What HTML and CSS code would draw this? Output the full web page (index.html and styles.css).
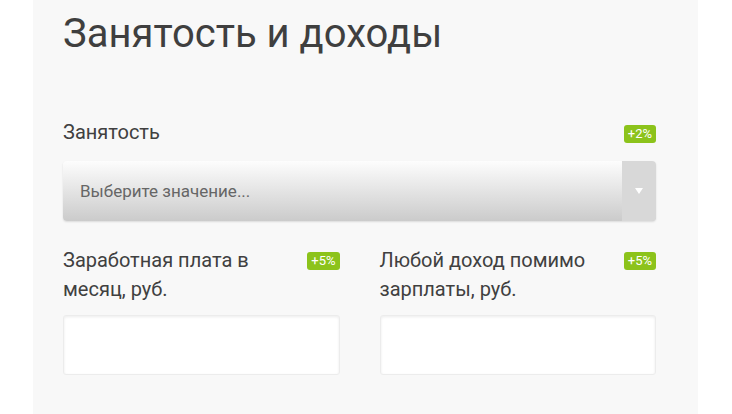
FILE: index.html
```html
<!DOCTYPE html>
<html lang="ru">
<head>
    <meta charset="UTF-8">
    <meta name="viewport" content="width=device-width, initial-scale=1.0">
    <title>Занятость и доходы</title>
    <link rel="stylesheet" href="styles.css">
</head>
<body>
    <div class="panel">
        <h2 class="title">Занятость и доходы</h2>

        <div class="field">
            <div class="field-head">
                <label class="label">Занятость</label>
                <span class="badge">+2%</span>
            </div>
            <div class="select">
                <span class="select-text">Выберите значение...</span>
                <span class="select-arrow"></span>
            </div>
        </div>

        <div class="row">
            <div class="field">
                <div class="field-head">
                    <label class="label">Заработная плата в месяц, руб.</label>
                    <span class="badge">+5%</span>
                </div>
                <input type="text" class="input">
            </div>
            <div class="field">
                <div class="field-head">
                    <label class="label">Любой доход помимо зарплаты, руб.</label>
                    <span class="badge">+5%</span>
                </div>
                <input type="text" class="input">
            </div>
        </div>
    </div>
</body>
</html>
```

FILE: styles.css
```css
*{
    margin: 0px;
    padding: 0px;
    box-sizing: border-box;
}
body {
    font-family: Roboto, "Liberation Sans", sans-serif;
    background-color: #fff;
    color: #444;
    overflow: hidden;
}
.panel {
    margin-left: 33px;
    width: 665px;
    min-height: 414px;
    background-color: #f8f8f8;
    padding: 11px 42px 0 30px;
}
.title {
    font-size: 40px;
    font-weight: 400;
    line-height: 46px;
    color: #3f3f3f;
    margin-bottom: 61px;
}
.field {
    margin-bottom: 20px;
}
.field-head {
    display: flex;
    justify-content: space-between;
    align-items: flex-start;
    margin-bottom: 14px;
}
.label {
    font-size: 20px;
    line-height: 29px;
    color: #404040;
    padding-right: 30px;
}
.badge {
    flex-shrink: 0;
    background-color: #8cc31b;
    color: #fff;
    font-size: 13px;
    line-height: 18px;
    padding: 0 4px;
    border-radius: 3px;
    margin-top: 7px;
}
.select {
    display: flex;
    height: 60px;
    border-radius: 4px;
    background: linear-gradient(#fdfdfd, #cbcbcb);
    box-shadow: 0 1px 2px rgba(0,0,0,0.12);
    overflow: hidden;
}
.select-text {
    flex: 1;
    padding-left: 17px;
    font-size: 17px;
    line-height: 60px;
    color: #666;
}
.select-arrow {
    width: 34px;
    background-color: #d8d8d8;
    position: relative;
}
.select-arrow::after {
    content: "";
    position: absolute;
    left: 13px;
    top: 27px;
    border-left: 4px solid transparent;
    border-right: 4px solid transparent;
    border-top: 6px solid #fff;
}
.row {
    display: grid;
    grid-template-columns: 1fr 1fr;
    gap: 40px;
    margin-top: 25px;
}
.row .field-head {
    margin-bottom: 11px;
}
.row .badge {
    margin-top: 6px;
}
.input {
    display: block;
    width: 100%;
    height: 60px;
    border: 1px solid #ececec;
    border-radius: 3px;
    background-color: #fff;
    box-shadow: inset 0 1px 3px rgba(0,0,0,0.08);
}
```
